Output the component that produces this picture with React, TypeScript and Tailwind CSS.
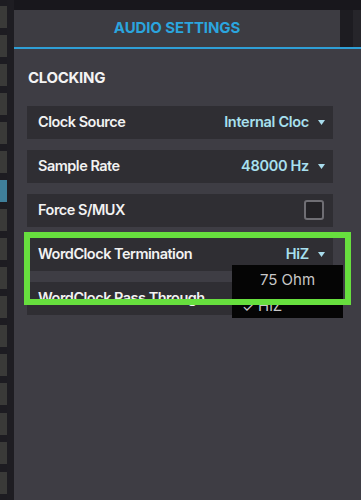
import React from "react"

const font = { fontFamily: "Inter, 'Noto Sans', sans-serif" }

function Caret() {
  return (
    <svg width="7" height="5" viewBox="0 0 7 5" className="ml-[9px]">
      <path d="M0 0 L7 0 L3.5 5 Z" fill="#a9dcec" />
    </svg>
  )
}

function SelectRow({ label, value }: { label: string; value: string }) {
  return (
    <div className="flex h-[33px] w-[306px] items-center justify-between bg-[#2f2e33] pl-[11px] pr-[8px]">
      <span className="text-[14.5px] font-semibold tracking-[-0.5px] text-[#f2f2f2]">{label}</span>
      <span className="flex items-center text-[14.5px] font-semibold tracking-[-0.3px] text-[#a8e0ef]">
        {value}
        <Caret />
      </span>
    </div>
  )
}

export default function App() {
  const blocks = [6, 35, 64, 93, 122, 151, 180, 209, 238, 267, 296, 325, 354, 383, 413, 442, 472]
  return (
    <div className="relative flex h-[500px] w-[361px] overflow-hidden bg-[#1d1c21]" style={font}>
      {/* left strip */}
      <div className="relative w-[7px] shrink-0">
        {blocks.map((y, i) => (
          <div
            key={i}
            className={"absolute left-0 h-[22px] w-[7px] " + (y === 180 ? "bg-[#3f7f9a]" : "bg-[#3a3a38]")}
            style={{ top: y }}
          />
        ))}
      </div>
      <div className="w-[7px] shrink-0 bg-[#1e1d22]" />

      {/* main */}
      <div className="flex flex-1 flex-col">
        <div className="h-[10px] bg-[#18171c]" />
        <div className="flex h-[37px]">
          <div className="flex w-[326px] items-center justify-center bg-[#3d3c42]">
            <span className="text-[15px] font-bold tracking-[-0.1px] text-[#2ba5de]">AUDIO SETTINGS</span>
          </div>
          <div className="w-[13px] bg-[#1d1c21]" />
          <div className="flex-1 bg-[#26252a]" />
        </div>
        <div className="h-[2px] bg-[#2f9fd6]" />
        <div className="flex flex-1 flex-col bg-[#3e3d44] pl-[13px]">
          <div className="pt-[18px] pl-px text-[15px] font-bold tracking-[-0.3px] text-[#f4f4f4]">CLOCKING</div>
          <div className="mt-[16px] flex flex-col gap-[11px]">
            <SelectRow label="Clock Source" value="Internal Cloc" />
            <SelectRow label="Sample Rate" value="48000 Hz" />
            <div className="flex h-[33px] w-[306px] items-center justify-between bg-[#2f2e33] pl-[11px] pr-[9px]">
              <span className="text-[14.5px] font-semibold tracking-[-0.5px] text-[#f2f2f2]">Force S/MUX</span>
              <div className="h-[20px] w-[20px] rounded-[3px] border-2 border-[#6f6e74] bg-[#232226]" />
            </div>
            <SelectRow label="WordClock Termination" value="HiZ" />
            <SelectRow label="WordClock Pass Through" value="HiZ" />
          </div>
        </div>
      </div>

      {/* open dropdown */}
      <div className="absolute left-[232px] top-[265px] flex h-[53px] w-[111px] flex-col bg-[#050505] text-[15px] text-[#c8c8c8]">
        <div className="flex h-[30px] items-center justify-center">75 Ohm</div>
        <div className="flex h-[23px] items-center pl-[10px]">
          <span className="w-[16px] text-[14px]">✓</span>
          <span>HiZ</span>
        </div>
      </div>

      {/* highlight box */}
      <div className="absolute left-[24px] top-[232px] h-[73px] w-[327px] border-[6px] border-[#67df3e]" />
    </div>
  )
}
